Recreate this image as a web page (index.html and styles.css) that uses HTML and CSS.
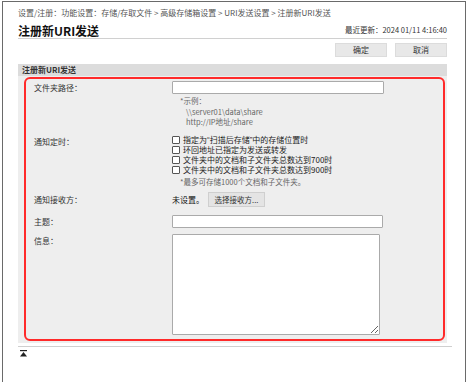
FILE: index.html
```html
<!DOCTYPE html>
<html>

<head>
    <title>注册新URI发送</title>
    <link rel="stylesheet" href="styles.css">
</head>

<body>
    <div class="frame">
        <div class="breadcrumb">设置/注册：功能设置：存储/存取文件 &gt; 高级存储箱设置 &gt; URI发送设置 &gt; 注册新URI发送</div>

        <div class="title-row">
            <h1>注册新URI发送</h1>
            <span class="updated">最近更新：2024 01/11 4:16:40</span>
        </div>

        <div class="btn-container">
            <button type="button" class="btn">确定</button>
            <button type="button" class="btn">取消</button>
        </div>

        <div class="section">
            <div class="section-title">注册新URI发送</div>
            <div class="section-body">
                <div class="highlight">
                    <div class="row row-center">
                        <label>文件夹路径：</label>
                        <input type="text" class="input-path">
                    </div>
                    <div class="row">
                        <span></span>
                        <div class="hint">
                            <div>*示例：</div>
                            <div class="hint-indent">\\server01\data\share</div>
                            <div class="hint-indent">http://IP地址/share</div>
                        </div>
                    </div>

                    <div class="row row-checks">
                        <label class="label-top">通知定时：</label>
                        <div class="checks">
                            <div class="check"><input type="checkbox"> 指定为<span class="quote">“</span>扫描后存储<span class="quote">”</span>中的存储位置时</div>
                            <div class="check"><input type="checkbox"> 环回地址已指定为发送或转发</div>
                            <div class="check"><input type="checkbox"> 文件夹中的文档和子文件夹总数达到700时</div>
                            <div class="check"><input type="checkbox"> 文件夹中的文档和子文件夹总数达到900时</div>
                        </div>
                    </div>
                    <div class="row">
                        <span></span>
                        <div class="hint">*最多可存储1000个文档和子文件夹。</div>
                    </div>

                    <div class="row row-center row-recipient">
                        <label>通知接收方：</label>
                        <div class="recipient">
                            <span>未设置。</span>
                            <button type="button" class="btn btn-small">选择接收方...</button>
                        </div>
                    </div>

                    <div class="row row-center row-subject">
                        <label>主题：</label>
                        <input type="text" class="input-subject">
                    </div>

                    <div class="row row-message">
                        <label class="label-top">信息：</label>
                        <textarea class="message"></textarea>
                    </div>
                </div>
            </div>
        </div>

        <div class="footer">
            <svg width="7" height="7" viewBox="0 0 7 7">
                <rect x="0" y="0" width="7" height="1.2" fill="#222" />
                <polygon points="3.5,2 7,6.5 0,6.5" fill="#222" />
            </svg>
        </div>
    </div>
</body>

</html>
```

FILE: styles.css
```css
body {
    margin: 0;
    padding: 0;
    background-color: #fff;
    font-family: "Noto Sans CJK SC", "Liberation Sans", sans-serif;
    color: #333;
}

.frame {
    margin: 1px 0 0 2px;
    width: 464px;
    height: 381px;
    border: 1px solid #6a6a6a;
    border-bottom: none;
    padding: 6px 18px 0 15px;
    box-sizing: border-box;
}

.breadcrumb {
    font-size: 8px;
    line-height: 10px;
    color: #555;
    white-space: nowrap;
}

.title-row {
    display: flex;
    justify-content: space-between;
    align-items: flex-end;
    margin-top: 6px;
    border-bottom: 1px solid #d0d0d0;
}

h1 {
    margin: 0;
    font-size: 12px;
    line-height: 14px;
    font-weight: bold;
    color: #111;
}

.updated {
    font-size: 7.5px;
    line-height: 10px;
    color: #333;
    padding-bottom: 3px;
}

.btn-container {
    display: flex;
    justify-content: flex-end;
    gap: 8px;
    margin-top: 4px;
}

.btn {
    font-family: inherit;
    font-size: 8px;
    color: #333;
    background-color: #e8e8e8;
    border: 1px solid #dcdcdc;
    width: 52px;
    height: 14px;
    padding: 0;
    line-height: 12px;
}

.section {
    margin-top: 7px;
}

.section-title {
    background-color: #dcdcdc;
    font-size: 8px;
    font-weight: bold;
    line-height: 12px;
    padding-left: 4px;
    color: #333;
}

.section-body {
    background-color: #eeeeee;
    padding: 1px 2px 2px 6px;
}

.highlight {
    border: 2px solid #ff2a2a;
    border-radius: 6px;
    padding: 2px 0 4px 8px;
}

.row {
    display: grid;
    grid-template-columns: 138px 1fr;
    font-size: 8px;
    line-height: 10px;
}

.row-center {
    align-items: center;
}

label {
    color: #333;
}

input[type="text"],
textarea {
    border: 1px solid #aaa;
    background-color: #fff;
    border-radius: 1px;
    box-sizing: border-box;
    margin: 0;
    padding: 0;
}

.input-path {
    width: 212px;
    height: 13px;
}

.hint {
    color: #666;
    font-size: 7.5px;
    line-height: 10.5px;
    padding-left: 8px;
    margin-top: 2px;
}

.hint-indent {
    padding-left: 6px;
}

.row-checks {
    margin-top: 7px;
}

.label-top {
    padding-top: 2px;
}

.check {
    display: flex;
    align-items: center;
    line-height: 10px;
    height: 10px;
    color: #222;
    white-space: nowrap;
}

.quote {
    font-family: "Liberation Sans", sans-serif;
}

.check input {
    appearance: none;
    width: 8px;
    height: 8px;
    margin: 0 3px 0 0;
    border: 1px solid #555;
    border-radius: 1px;
    background-color: #fff;
    box-sizing: border-box;
}

.row-recipient {
    margin-top: 5px;
}

.recipient {
    display: flex;
    align-items: center;
    gap: 4px;
    color: #111;
}

.btn-small {
    width: 57px;
    height: 15px;
    background-color: #e4e4e4;
    border: 1px solid #cfcfcf;
    font-size: 7.5px;
}

.row-subject {
    margin-top: 8px;
}

.input-subject {
    width: 211px;
    height: 13px;
}

.row-message {
    margin-top: 6px;
}

.message {
    width: 208px;
    height: 101px;
    resize: both;
}

.footer {
    margin-top: 3px;
    border-top: 1px solid #cfcfcf;
    padding: 3px 0 0 2px;
    width: 432px;
}

.footer svg {
    display: block;
}
```
